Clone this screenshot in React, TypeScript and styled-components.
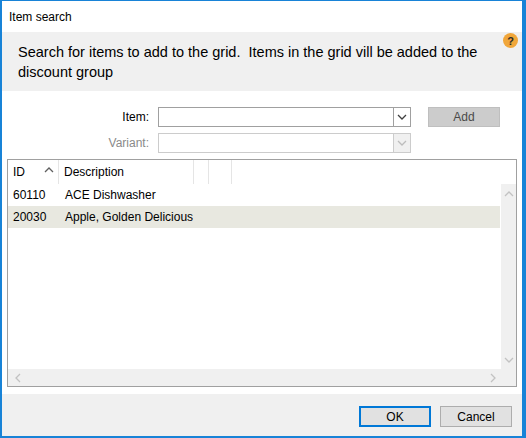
import React from "react";
import styled, { createGlobalStyle } from "styled-components";

const GlobalStyle = createGlobalStyle`
  html, body {
    margin: 0;
    padding: 0;
    background: #ffffff;
  }
  * {
    box-sizing: border-box;
  }
`;

type Row = { id: string; description: string };

const rows: Row[] = [
  { id: "60110", description: "ACE Dishwasher" },
  { id: "20030", description: "Apple, Golden Delicious" },
];

const Chevron = ({ dir, color }: { dir: "up" | "down" | "left" | "right"; color: string }) => {
  const pts = {
    up: "1,6 5,2 9,6",
    down: "1,2 5,6 9,2",
    left: "6,1 2,5 6,9",
    right: "2,1 6,5 2,9",
  }[dir];
  const horizontal = dir === "left" || dir === "right";
  return (
    <svg width={horizontal ? 8 : 10} height={horizontal ? 10 : 8} viewBox={horizontal ? "0 0 8 10" : "0 0 10 8"}>
      <polyline points={pts} fill="none" stroke={color} strokeWidth="1.3" />
    </svg>
  );
};

const App = () => {
  return (
    <>
      <GlobalStyle />
      <Window>
        <TitleBar>Item search</TitleBar>
        <Banner>
          <BannerText>
            Search for items to add to the grid.&nbsp; Items in the grid vill be added to the discount group
          </BannerText>
          <HelpIcon>?</HelpIcon>
        </Banner>

        <Form>
          <Label>Item:</Label>
          <Combo>
            <ComboField />
            <ComboButton>
              <Chevron dir="down" color="#404040" />
            </ComboButton>
          </Combo>
          <AddButton>Add</AddButton>

          <Label $disabled>Variant:</Label>
          <Combo $disabled>
            <ComboField />
            <ComboButton $disabled>
              <Chevron dir="down" color="#bcbcbc" />
            </ComboButton>
          </Combo>
        </Form>

        <Grid>
          <HeaderRow>
            <HeaderCell $width={51}>
              ID
              <SortArrow>
                <Chevron dir="up" color="#606060" />
              </SortArrow>
            </HeaderCell>
            <HeaderCell $width={135}>Description</HeaderCell>
            <HeaderCell $width={15} />
            <HeaderCell $width={23} />
          </HeaderRow>
          <Body>
            <RowsArea>
              {rows.map((r, i) => (
                <DataRow key={r.id} $selected={i === 1}>
                  <DataCell $width={51}>{r.id}</DataCell>
                  <DataCell $width={135}>{r.description}</DataCell>
                </DataRow>
              ))}
            </RowsArea>
            <VScroll>
              <Chevron dir="up" color="#c2c2c2" />
              <Chevron dir="down" color="#c2c2c2" />
            </VScroll>
          </Body>
          <HScroll>
            <Chevron dir="left" color="#c2c2c2" />
            <Chevron dir="right" color="#c2c2c2" />
          </HScroll>
        </Grid>

        <Footer>
          <DialogButton $default>OK</DialogButton>
          <DialogButton>Cancel</DialogButton>
        </Footer>
      </Window>
    </>
  );
};

export default App;

const Window = styled.div`
  width: 526px;
  height: 438px;
  display: flex;
  flex-direction: column;
  background: #ffffff;
  border-top: 1px solid #1883d7;
  border-left: 2px solid #1883d7;
  border-right: 4px solid #1883d7;
  border-bottom: 2px solid #1883d7;
  font-family: "Liberation Sans", Arial, sans-serif;
  font-size: 12px;
  color: #000000;
`;

const TitleBar = styled.div`
  height: 31px;
  display: flex;
  align-items: center;
  padding-left: 7px;
  font-size: 12px;
`;

const Banner = styled.div`
  height: 59px;
  background: #f0f0f0;
  display: flex;
  justify-content: space-between;
  align-items: flex-start;
  padding: 10px 4px 0 16px;
`;

const BannerText = styled.div`
  width: 468px;
  font-size: 14.5px;
  line-height: 20px;
  color: #000000;
`;

const HelpIcon = styled.div`
  width: 15px;
  height: 15px;
  margin-top: -9px;
  border-radius: 50%;
  background: #f0a63a;
  color: #2a2a2a;
  font-weight: bold;
  font-size: 11px;
  display: flex;
  align-items: center;
  justify-content: center;
`;

const Form = styled.div`
  display: grid;
  grid-template-columns: 142px 253px 72px;
  grid-auto-rows: 20px;
  column-gap: 9px;
  row-gap: 6px;
  padding: 16px 0 0 5px;

  & > *:nth-child(3) {
    margin-left: 8px;
  }
`;

const Label = styled.div<{ $disabled?: boolean }>`
  display: flex;
  align-items: center;
  justify-content: flex-end;
  color: ${(p) => (p.$disabled ? "#8a8a8a" : "#000000")};
`;

const Combo = styled.div<{ $disabled?: boolean }>`
  display: flex;
  border: 1px solid ${(p) => (p.$disabled ? "#cccccc" : "#a0a0a0")};
  background: #ffffff;
`;

const ComboField = styled.div`
  flex: 1;
`;

const ComboButton = styled.div<{ $disabled?: boolean }>`
  width: 17px;
  display: flex;
  align-items: center;
  justify-content: center;
  border-left: 1px solid ${(p) => (p.$disabled ? "#cccccc" : "#a0a0a0")};
  background: ${(p) => (p.$disabled ? "#f0f0f0" : "#ffffff")};
`;

const AddButton = styled.div`
  width: 72px;
  height: 20px;
  display: flex;
  align-items: center;
  justify-content: center;
  background: #cccccc;
  border: 1px solid #bfbfbf;
  color: #4a4a4a;
`;

const Grid = styled.div`
  margin: 6px 5px 0 5px;
  height: 228px;
  border: 1px solid #a0a0a0;
  display: flex;
  flex-direction: column;
  background: #ffffff;
`;

const HeaderRow = styled.div`
  height: 24px;
  display: flex;
`;

const HeaderCell = styled.div<{ $width: number }>`
  width: ${(p) => p.$width}px;
  display: flex;
  align-items: center;
  padding-left: 5px;
  border-right: 1px solid #e5e5e5;
  position: relative;
`;

const SortArrow = styled.span`
  margin-left: auto;
  margin-right: 4px;
  display: flex;
  margin-top: -4px;
`;

const Body = styled.div`
  flex: 1;
  display: flex;
`;

const RowsArea = styled.div`
  flex: 1;
  padding-right: 1px;
`;

const DataRow = styled.div<{ $selected?: boolean }>`
  height: 22px;
  display: flex;
  align-items: center;
  background: ${(p) => (p.$selected ? "#e8e8e0" : "#ffffff")};
`;

const DataCell = styled.div<{ $width: number }>`
  width: ${(p) => p.$width}px;
  padding-left: 5px;
  margin-right: 1px;
`;

const VScroll = styled.div`
  width: 15px;
  background: #f0f0f0;
  display: flex;
  flex-direction: column;
  justify-content: space-between;
  align-items: center;
  padding: 6px 0 5px;
`;

const HScroll = styled.div`
  height: 17px;
  background: #f0f0f0;
  display: flex;
  justify-content: space-between;
  align-items: center;
  padding: 0 19px 0 6px;
`;

const Footer = styled.div`
  margin-top: 7px;
  flex: 1;
  background: #f0f0f0;
  display: flex;
  justify-content: flex-end;
  align-items: flex-start;
  gap: 9px;
  padding: 12px 10px 0 0;
`;

const DialogButton = styled.div<{ $default?: boolean }>`
  width: 72px;
  height: 21px;
  display: flex;
  align-items: center;
  justify-content: center;
  background: #e1e1e1;
  border: ${(p) => (p.$default ? "2px solid #0078d7" : "1px solid #adadad")};
  font-size: 12px;
`;
